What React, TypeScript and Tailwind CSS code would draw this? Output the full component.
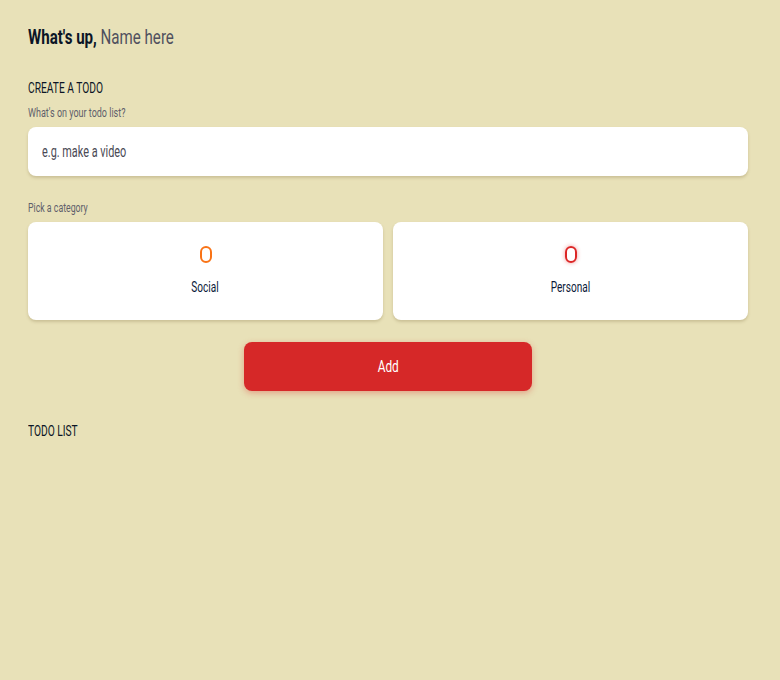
import React from "react";

const font = { fontFamily: 'Roboto, "Liberation Sans", sans-serif' };

export default function App() {
  return (
    <div
      className="min-h-[680px] w-full bg-[#e8e1b8] pl-[28px] pr-[32px] pt-[24px] text-[#0f172a]"
      style={font}
    >
      <h1 className="text-[20px] font-bold leading-[26px] text-[#0b1526]">
        <span className="inline-block origin-left scale-x-[0.755] whitespace-nowrap">
          What's up, <span className="font-normal text-[#50505e]">Name here</span>
        </span>
      </h1>

      <h2 className="mt-[29px] text-[14px] leading-[18px] text-[#0b1526]">
        <span className="inline-block origin-left scale-x-[0.73] whitespace-nowrap">CREATE A TODO</span>
      </h2>
      <p className="mt-[9px] text-[12px] leading-[14px] text-[#5f5f6b]">
        <span className="inline-block origin-left scale-x-[0.75] whitespace-nowrap">What's on your todo list?</span>
      </p>

      <div className="mt-[7px] flex h-[49px] w-full items-center rounded-[8px] bg-white px-[14px] shadow-[0_2px_3px_rgba(120,100,50,0.25)]">
        <span className="inline-block origin-left scale-x-[0.68] whitespace-nowrap text-[16px] text-[#4a4a55]">
          e.g. make a video
        </span>
      </div>

      <p className="mt-[25px] text-[12px] leading-[14px] text-[#5f5f6b]">
        <span className="inline-block origin-left scale-x-[0.73] whitespace-nowrap">Pick a category</span>
      </p>

      <div className="mt-[7px] grid grid-cols-2 gap-[10px]">
        <div className="flex h-[98px] flex-col items-center justify-center rounded-[8px] bg-white shadow-[0_2px_3px_rgba(120,100,50,0.25)]">
          <span className="h-[17px] w-[12px] rounded-full border-2 border-[#f97316]" />
          <span className="mt-[15px] inline-block scale-x-[0.72] whitespace-nowrap text-[14px] leading-[18px] text-[#0b1a3a]">
            Social
          </span>
        </div>
        <div className="flex h-[98px] flex-col items-center justify-center rounded-[8px] bg-white shadow-[0_2px_3px_rgba(120,100,50,0.25)]">
          <span className="h-[17px] w-[12px] rounded-full border-2 border-[#dc2626] shadow-[0_0_4px_rgba(220,38,38,0.45)]" />
          <span className="mt-[15px] inline-block scale-x-[0.72] whitespace-nowrap text-[14px] leading-[18px] text-[#0b1a3a]">
            Personal
          </span>
        </div>
      </div>

      <div className="mt-[22px] flex justify-center">
        <button
          className="h-[49px] w-[288px] rounded-[8px] bg-[#d62828] text-white shadow-[0_2px_6px_rgba(214,40,40,0.35)]"
          style={font}
        >
          <span className="inline-block scale-x-[0.74] text-[16px]">Add</span>
        </button>
      </div>

      <h2 className="mt-[31px] text-[14px] leading-[18px] text-[#0b1526]">
        <span className="inline-block origin-left scale-x-[0.73] whitespace-nowrap">TODO LIST</span>
      </h2>
    </div>
  );
}
